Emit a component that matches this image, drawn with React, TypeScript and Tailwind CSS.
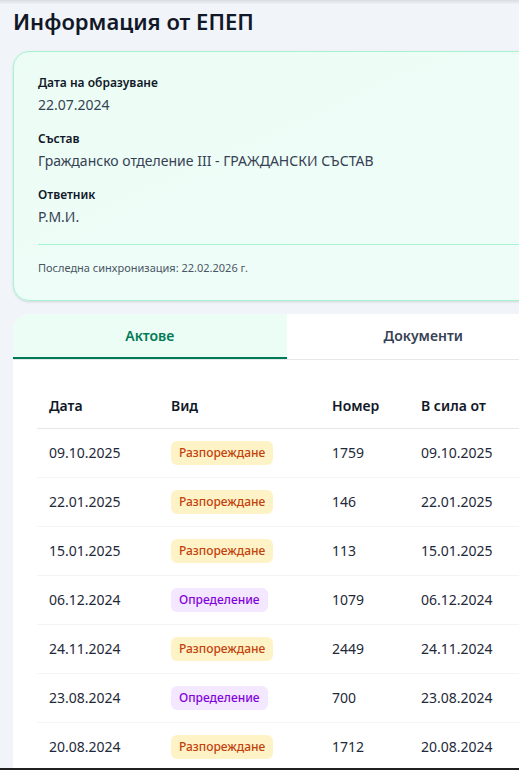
import React, { useState } from "react";

type Act = { date: string; kind: "Разпореждане" | "Определение"; number: string; effective: string };

const acts: Act[] = [
  { date: "09.10.2025", kind: "Разпореждане", number: "1759", effective: "09.10.2025" },
  { date: "22.01.2025", kind: "Разпореждане", number: "146", effective: "22.01.2025" },
  { date: "15.01.2025", kind: "Разпореждане", number: "113", effective: "15.01.2025" },
  { date: "06.12.2024", kind: "Определение", number: "1079", effective: "06.12.2024" },
  { date: "24.11.2024", kind: "Разпореждане", number: "2449", effective: "24.11.2024" },
  { date: "23.08.2024", kind: "Определение", number: "700", effective: "23.08.2024" },
  { date: "20.08.2024", kind: "Разпореждане", number: "1712", effective: "20.08.2024" },
];

function Field({ label, value }: { label: string; value: string }) {
  return (
    <div>
      <p className="text-[12px] font-semibold text-gray-900 leading-4">{label}</p>
      <p className="text-[14px] text-gray-700 mt-[4px] leading-5">{value}</p>
    </div>
  );
}

export default function App() {
  const [tab, setTab] = useState<"acts" | "docs">("acts");

  return (
    <div
      className="relative h-[770px] overflow-hidden bg-[#f1f4f9]"
      style={{ fontFamily: '"Noto Sans", "Open Sans", sans-serif' }}
    >
      {/* shadow from header above */}
      <div className="h-[4px] bg-gradient-to-b from-[#d9dce1] to-[#eef1f6]" />

      <div className="w-[560px] pl-[13px]">
        <h1 className="text-[22px] font-semibold text-[#111827] leading-7 mt-[3px]">Информация от ЕПЕП</h1>

        {/* EPEP info card */}
        <div className="mt-[16px] rounded-2xl border border-emerald-200 bg-gradient-to-br from-[#ecfdf5] to-[#effdf9] shadow-sm px-6 pt-[23px] pb-[24px]">
          <div className="flex flex-col gap-[16px]">
            <Field label="Дата на образуване" value="22.07.2024" />
            <Field label="Състав" value="Гражданско отделение III - ГРАЖДАНСКИ СЪСТАВ" />
            <Field label="Ответник" value="Р.М.И." />
          </div>
          <div className="mt-[17px] border-t border-emerald-200 pt-[15px]">
            <p className="text-[11px] text-gray-600 leading-4">Последна синхронизация: 22.02.2026 г.</p>
          </div>
        </div>

        {/* Acts / documents */}
        <div className="mt-[13px] rounded-t-2xl bg-white overflow-hidden">
          <div className="flex border-b border-gray-200">
            <button
              onClick={() => setTab("acts")}
              className={
                tab === "acts"
                  ? "w-1/2 h-[45px] text-[14px] font-semibold text-emerald-700 bg-[#ecfdf5] border-b-2 border-emerald-700"
                  : "w-1/2 h-[45px] text-[14px] font-semibold text-gray-700 bg-white border-b-2 border-transparent"
              }
            >
              Актове
            </button>
            <button
              onClick={() => setTab("docs")}
              className={
                tab === "docs"
                  ? "w-1/2 h-[45px] text-[14px] font-semibold text-emerald-700 bg-[#ecfdf5] border-b-2 border-emerald-700"
                  : "w-1/2 h-[45px] text-[14px] font-semibold text-gray-700 bg-white border-b-2 border-transparent"
              }
            >
              Документи
            </button>
          </div>

          <div className="px-6 pt-[23px] pb-6">
            <table className="w-full text-left text-[14px]">
              <thead>
                <tr className="border-b border-gray-200">
                  <th className="w-[122px] h-[45px] px-3 font-semibold text-gray-900">Дата</th>
                  <th className="w-[161px] px-3 font-semibold text-gray-900">Вид</th>
                  <th className="w-[89px] px-3 font-semibold text-gray-900">Номер</th>
                  <th className="px-3 font-semibold text-gray-900">В сила от</th>
                </tr>
              </thead>
              <tbody>
                {acts.map((a) => (
                  <tr key={a.date + a.number} className="border-b border-gray-100">
                    <td className="h-[49px] px-3 text-gray-800">{a.date}</td>
                    <td className="px-3">
                      <span
                        className={
                          a.kind === "Разпореждане"
                            ? "inline-block rounded-md bg-amber-100 px-2 py-[3px] text-[12px] font-medium text-[#c2410c]"
                            : "inline-block rounded-md bg-purple-100 px-2 py-[3px] text-[12px] font-medium text-purple-700"
                        }
                      >
                        {a.kind}
                      </span>
                    </td>
                    <td className="px-3 text-gray-800">{a.number}</td>
                    <td className="px-3 text-gray-800">{a.effective}</td>
                  </tr>
                ))}
              </tbody>
            </table>
          </div>
        </div>
      </div>

      <div className="absolute bottom-0 left-0 right-0 h-[2px] bg-[#1f2022]" />
    </div>
  );
}
